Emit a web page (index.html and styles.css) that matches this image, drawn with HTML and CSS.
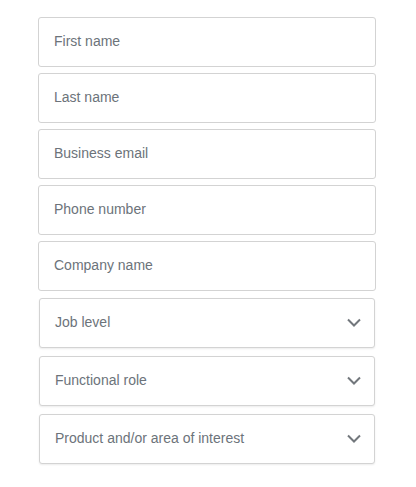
FILE: index.html
```html
<!DOCTYPE html>
<html>
<head>
<meta charset="utf-8">
<link rel="stylesheet" href="styles.css">
</head>
<body>
<form class="form">
  <div class="field"><span class="ph">First name</span></div>
  <div class="field"><span class="ph">Last name</span></div>
  <div class="field"><span class="ph">Business email</span></div>
  <div class="field"><span class="ph">Phone number</span></div>
  <div class="field"><span class="ph">Company name</span></div>
  <div class="select first-select"><span class="ph">Job level</span>
    <svg class="chev" width="14" height="9" viewBox="0 0 14 9"><path d="M1 1.5 L7 7.5 L13 1.5" fill="none" stroke="#72777c" stroke-width="2"/></svg></div>
  <div class="select"><span class="ph">Functional role</span>
    <svg class="chev" width="14" height="9" viewBox="0 0 14 9"><path d="M1 1.5 L7 7.5 L13 1.5" fill="none" stroke="#72777c" stroke-width="2"/></svg></div>
  <div class="select"><span class="ph">Product and/or area of interest</span>
    <svg class="chev" width="14" height="9" viewBox="0 0 14 9"><path d="M1 1.5 L7 7.5 L13 1.5" fill="none" stroke="#72777c" stroke-width="2"/></svg></div>
</form>
</body>
</html>
```
FILE: styles.css
```css
html, body {
  margin: 0;
  padding: 0;
  background: #ffffff;
}
body {
  font-family: "Liberation Sans", Arial, sans-serif;
}
.form {
  display: flex;
  flex-direction: column;
  gap: 6px;
  width: 338px;
  margin: 17px 0 0 38px;
}
.field, .select {
  box-sizing: border-box;
  height: 50px;
  border: 1px solid #d3d3d3;
  border-radius: 3px;
  display: flex;
  align-items: center;
  padding: 0 15px 2px;
  background: #fff;
}
.select {
  margin: 0 1px 2px;
  box-shadow: 0 1px 2px rgba(0,0,0,0.08);
  justify-content: space-between;
  padding: 0 13px 2px 15px;
}
.first-select {
  margin-top: 1px;
}
.ph {
  font-size: 14px;
  line-height: 16px;
  color: #6c737a;
}
.chev {
  display: block;
  margin-top: 1px;
}
```
